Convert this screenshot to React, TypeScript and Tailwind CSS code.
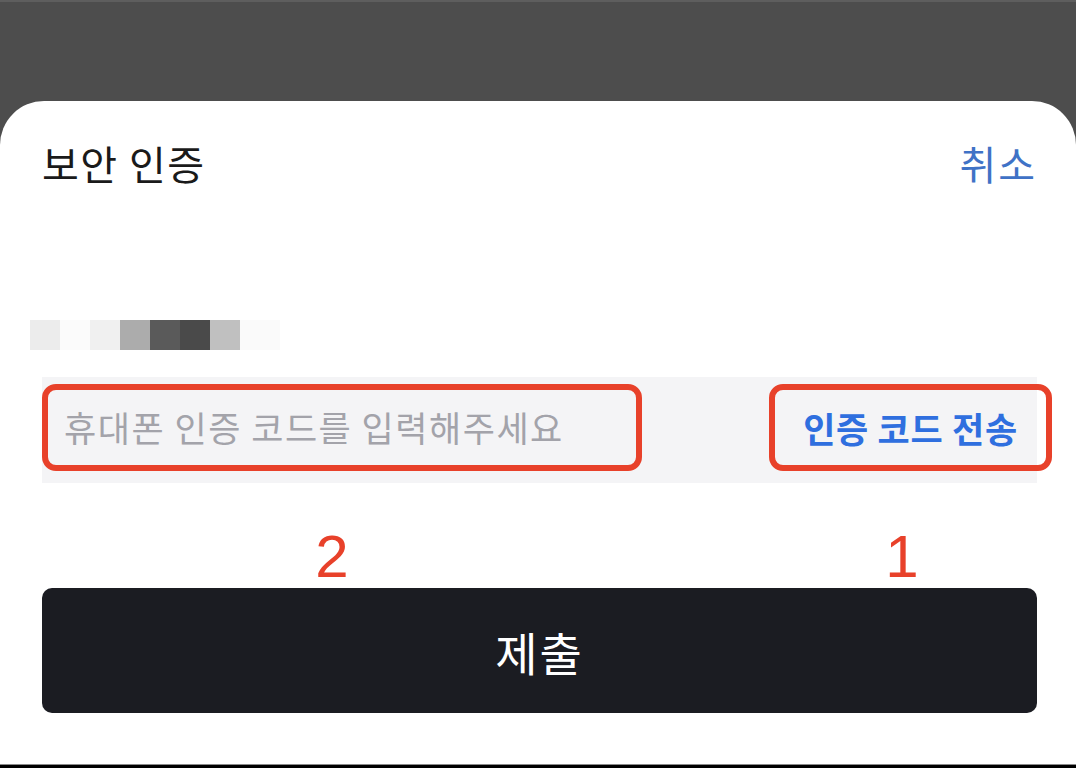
const KR = { fontFamily: '"Noto Sans CJK KR", "Noto Sans", sans-serif' };

// pixelated redaction over the account number
const redactCells = [
  { c: "#ececec", w: "w-[30px]" },
  { c: "#fbfbfb", w: "w-[30px]" },
  { c: "#f0f0f0", w: "w-[30px]" },
  { c: "#acacac", w: "w-[30px]" },
  { c: "#5a5a5a", w: "w-[30px]" },
  { c: "#4a4a4a", w: "w-[30px]" },
  { c: "#c0c0c0", w: "w-[30px]" },
  { c: "#fafafa", w: "w-[40px]" },
];

export default function App() {
  return (
    <div className="w-[1076px] h-[768px] bg-[#4d4d4d] flex flex-col overflow-hidden" style={KR}>
      <div className="h-[2px] bg-[#5e5e5e]" />
      <div className="h-[99px]" />

      {/* Bottom sheet */}
      <div className="flex-1 bg-white rounded-t-[44px] flex flex-col pl-[42px] pr-[39px]">
        {/* Header */}
        <div className="mt-[40px] h-[44px] flex items-center justify-between">
          <span className="text-[40px] leading-none tracking-[1.5px] text-[#1a1a1a]">보안 인증</span>
          <button className="text-[40px] leading-none tracking-[2px] text-[#3f72c6]">취소</button>
        </div>

        {/* Masked phone number */}
        <div className="mt-[135px] -ml-[12px] flex h-[30px]">
          {redactCells.map((cell, i) => (
            <div key={i} className={`${cell.w} h-full`} style={{ backgroundColor: cell.c }} />
          ))}
        </div>

        {/* Code input row */}
        <div className="mt-[27px] h-[106px] bg-[#f4f4f6] flex items-start pt-[7px]">
          <div className="w-[600px] h-[87px] border-[6px] border-[#e8412a] rounded-[14px] flex items-center pl-[16px]">
            <input
              placeholder="휴대폰 인증 코드를 입력해주세요"
              className="w-full bg-transparent outline-none text-[35px] tracking-[1.5px] text-[#1a1a1a] placeholder:text-[#a3a3aa]"
              style={KR}
            />
          </div>
          <div className="flex-1" />
          <div className="w-[283px] -mr-[15px] h-[87px] border-[6px] border-[#e8412a] rounded-[14px] flex items-center justify-center">
            <button className="text-[35px] font-bold tracking-[0.7px] text-[#2f6fdf] leading-none">인증 코드 전송</button>
          </div>
        </div>

        {/* Annotation numbers */}
        <div className="mt-[44px] h-[60px] flex text-[60px] leading-none text-[#e8412a]" style={{ fontFamily: '"Liberation Sans", Arial, sans-serif' }}>
          <div className="w-[580px] text-center">2</div>
          <div className="flex-1" />
          <div className="w-[90px] text-center">1</div>
          <div className="w-[90px]" />
        </div>

        {/* Submit */}
        <button className="mt-[1px] h-[125px] w-full rounded-[10px] bg-[#1b1c22] text-white text-[46px] tracking-[2px] leading-none flex items-center justify-center">
          제출
        </button>
      </div>

      <div className="h-[1px] bg-[#8a8a8a]" />
      <div className="h-[3px] bg-black" />
    </div>
  );
}
